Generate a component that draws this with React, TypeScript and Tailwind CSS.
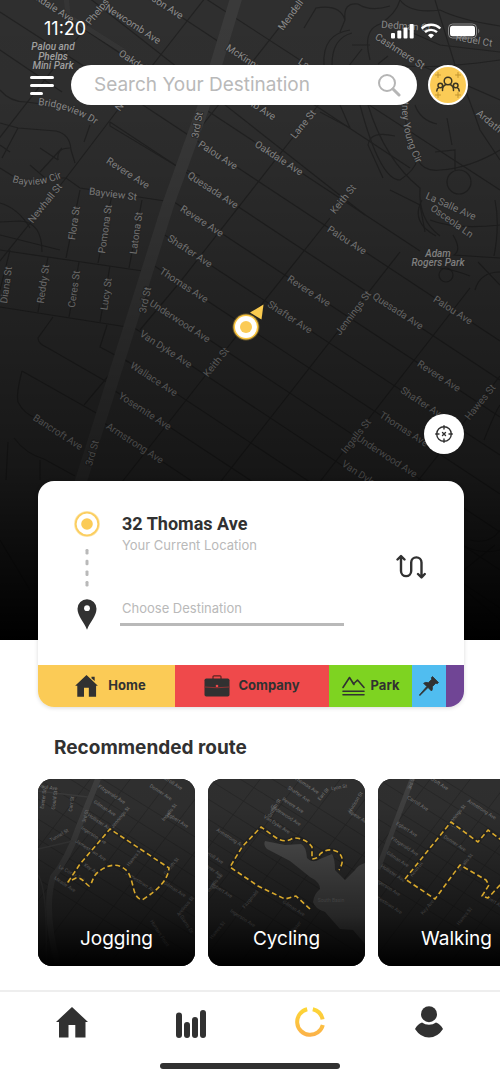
import type { ReactNode } from 'react';

type Label = [text: string, x: number, y: number, angle: number];

const AVE = 33;
const ST = -51;

const mapLabels: Label[] = [
  ['Oakdale Ave', 50, 5, AVE],
  ['Phelps St', 101, 7, ST],
  ['Newcomb Ave', 133, 24, AVE],
  ['Hudson Ave', 160, 2, AVE],
  ['McKinnon Ave', 254, 64, AVE],
  ['Oakdale Ave', 143, 67, AVE],
  ['La Salle Ave', 322, 75, AVE],
  ['Newcomb Ave', 248, 100, AVE],
  ['Newhall St', 132, 91, ST],
  ['3rd St', 197, 125, -80],
  ['Palou Ave', 218, 155, AVE],
  ['Quesada Ave', 213, 190, AVE],
  ['Revere Ave', 202, 221, AVE],
  ['Revere Ave', 128, 173, AVE],
  ['Bayview St', 113, 194, 7],
  ['Newhall St', 45, 203, ST],
  ['Flora St', 74, 223, -82],
  ['Pomona St', 105, 229, -82],
  ['Latona St', 136, 233, -82],
  ['Diana St', 6, 285, -82],
  ['Reddy St', 43, 284, -82],
  ['Ceres St', 74, 289, -82],
  ['Lucy St', 106, 294, -82],
  ['3rd St', 145, 300, -78],
  ['3rd St', 92, 453, -74],
  ['Shafter Ave', 190, 251, AVE],
  ['Thomas Ave', 184, 285, AVE],
  ['Underwood Ave', 180, 321, AVE],
  ['Van Dyke Ave', 166, 349, AVE],
  ['Wallace Ave', 154, 379, AVE],
  ['Yosemite Ave', 145, 411, AVE],
  ['Armstrong Ave', 135, 443, AVE],
  ['Bancroft Ave', 58, 432, AVE],
  ['Keith St', 216, 362, ST],
  ['Mendell St', 294, 10, -54],
  ['Dedman Ct', 406, 26, 4],
  ['Cashmere St', 400, 51, AVE],
  ['Reuel Ct', 474, 40, 10],
  ['Lane St', 303, 124, ST],
  ['Oakdale Ave', 279, 158, AVE],
  ['Keith St', 343, 199, ST],
  ['Ardath Ct', 494, 125, 40],
  ['La Salle Ave', 451, 206, 24],
  ['Osceola Ln', 452, 221, 35],
  ['Palou Ave', 347, 240, AVE],
  ['Revere Ave', 309, 291, AVE],
  ['Shafter Ave', 290, 317, AVE],
  ['Jennings St', 353, 313, -53],
  ['Quesada Ave', 398, 311, AVE],
  ['Palou Ave', 453, 310, AVE],
  ['Revere Ave', 439, 376, AVE],
  ['Shafter Ave', 423, 403, AVE],
  ['Thomas Ave', 404, 429, AVE],
  ['Hawes St', 480, 402, ST],
  ['Ingalls St', 356, 436, ST],
  ['Underwood Ave', 387, 456, AVE],
  ['Van Dyke Ave', 368, 479, AVE],
];

const roads = [
  'M120 -57L500 190',
  'M95 -40L410 168',
  'M60 -25L365 215',
  'M0 -26L420 251',
  'M0 12L96 74L500 341',
  'M0 50L62 92M110 122L500 380',
  'M165 196L500 417',
  'M157 230L500 455',
  'M150 263L500 494',
  'M140 294L500 532',
  'M130 325L500 570',
  'M118 355L500 608',
  'M106 385L480 632',
  'M95 417L420 632',
  'M107 0L-10 150',
  'M216 -16L120 107L66 178L-20 286',
  'M301 0L190 141',
  'M362 49L180 282L140 330',
  'M330 218L216 362L100 510',
  'M400 252L200 508L120 610',
  'M470 288L250 572',
  'M500 376L320 606',
  'M0 250L143 271M0 307L127 327M0 235L60 250',
  'M10 250L0 290M48 257L38 312M79 262L69 317M110 266L100 322',
  'M80 190L66 258M112 195L98 263M142 200L129 268',
  'M0 123L18 128L56 131Q70 134 71 150L75 163',
  'M18 128L2 158M40 148L58 160M30 165L45 178L66 178L80 188L165 201',
  'M58 160Q56 148 70 148M40 172L62 148M0 145L10 152M0 168L16 178M0 203Q18 208 30 228',
  'M0 222L20 221Q42 222 42 252',
  'M90 125L84 142M110 122L110 126L175 165M175 165L200 176',
  'M0 90Q10 102 26 102L42 104',
  'M53 317L38 338Q38 344 48 348L107 382M107 325L100 347L128 362',
  'M115 368L84 405M22 371Q16 394 18 402Q24 414 36 418M22 371L98 414',
  'M8 442L6 480M14 438Q26 454 44 459L75 476M40 460V480',
  'M304 28L316 8Q340 4 345 20L340 32M345 20Q343 2 358 4Q370 12 390 6',
  'M324 65Q322 34 350 30M332 65Q332 38 352 33',
  'M352 45L370 45M370 60Q362 30 380 24Q396 14 400 0',
  'M378 64L388 56M390 23L440 45L500 52M395 65Q430 70 500 60',
  'M400 0Q410 14 440 10Q460 20 500 26M435 0L455 65Q470 100 480 130L500 160',
  'M420 65L500 100M405 105Q404 132 418 160Q424 172 440 170Q470 168 500 150',
  'M360 105Q380 180 400 180Q415 170 417 160M368 105Q385 160 420 188Q418 220 440 236',
  'M340 105L350 128L320 112M395 136Q370 130 368 145L383 178M415 105Q420 120 437 124',
  'M455 170V150L435 152M447 118L452 145M390 190L420 205L425 232',
  'M422 200Q410 222 436 236M430 220Q455 230 500 225M453 235Q462 250 454 255L500 258M495 200Q500 225 494 256',
  'M475 290Q480 272 500 272M440 268Q455 270 470 276M478 262L500 285',
  'M484 440Q496 410 500 405M470 540Q490 545 500 530M465 590L500 620M0 540L30 590',
  'M464 570L495 545M500 550Q460 560 430 510',
];

function MapText({ text, x, y, angle }: { text: string; x: number; y: number; angle: number }) {
  return (
    <text transform={`translate(${x} ${y}) rotate(${angle})`} textAnchor="middle" dominantBaseline="central">
      {text}
    </text>
  );
}

function CityMap() {
  return (
    <svg
      className="absolute inset-x-0 top-0 h-[640px] w-full bg-black"
      viewBox="0 0 500 640"
      preserveAspectRatio="xMidYMin slice"
      aria-hidden="true"
    >
      <defs>
        <linearGradient id="mapFade" x1="0" y1="0" x2="0" y2="1">
          <stop offset="0" stopColor="#000" stopOpacity="0" />
          <stop offset="0.16" stopColor="#000" stopOpacity="0.03" />
          <stop offset="0.36" stopColor="#000" stopOpacity="0.18" />
          <stop offset="0.73" stopColor="#000" stopOpacity="0.52" />
          <stop offset="1" stopColor="#000" stopOpacity="1" />
        </linearGradient>
        <path id="bridgeview" d="M38 105Q70 108 96 125" />
        <path id="bayviewCir" d="M12 182Q36 190 66 176" />
        <path id="whitney" d="M404 85Q396 128 420 170" />
      </defs>
      <rect width="500" height="640" fill="#2f2f2f" />
      <g fill="none" stroke="#222" strokeWidth="1.2">
        {roads.map((d) => (
          <path key={d} d={d} />
        ))}
        <circle cx="459" cy="182" r="12" />
        <circle cx="446" cy="275" r="7" />
      </g>
      <g fill="none" stroke="#3a3a3a">
        <path d="M238 -8L203 108L168 205L75 500L60 640" strokeWidth="12" />
        <path d="M66 -5L68 16L125 52" strokeWidth="5" opacity="0.6" />
      </g>
      <g
        fontFamily="Roboto, 'Liberation Sans', sans-serif"
        fontSize="10"
        fill="#8c8c8c"
        stroke="#2d2d2d"
        strokeWidth="2"
        paintOrder="stroke"
      >
        {mapLabels.map(([text, x, y, angle]) => (
          <MapText key={`${text}${x}`} text={text} x={x} y={y} angle={angle} />
        ))}
        <text>
          <textPath href="#bridgeview">Bridgeview Dr</textPath>
        </text>
        <text>
          <textPath href="#bayviewCir">Bayview Cir</textPath>
        </text>
        <text>
          <textPath href="#whitney">Whitney Young Cir</textPath>
        </text>
        <g textAnchor="middle" fontStyle="italic" fontWeight="500" fill="#a3a3a3">
          <text x="53" y="50">Palou and</text>
          <text x="53" y="60">Phelps</text>
          <text x="53" y="69">Mini Park</text>
          <text x="438" y="257">Adam</text>
          <text x="438" y="266">Rogers Park</text>
        </g>
      </g>
      <rect width="500" height="640" fill="url(#mapFade)" />
      <circle cx="246" cy="327" r="13.5" fill="#fbca4f" opacity="0.35" />
      <circle cx="246" cy="327" r="12.5" fill="#fbc640" />
      <circle cx="246" cy="327" r="11" fill="#fff" />
      <circle cx="246" cy="327" r="6" fill="#fbcb56" />
      <path d="M250 312.500L263.500 304.500L261.500 319.500Z" fill="#fbcb4f" />
    </svg>
  );
}

function StatusBar() {
  return (
    <div className="flex h-[58px] items-center justify-between pl-11 pr-[19px] text-white">
      <span className="text-[18px] leading-6">11:20</span>
      <svg className="mt-1 h-5 w-[91px]" viewBox="0 0 91 20" fill="none" aria-hidden="true">
        <g fill="#fff">
          <rect x="1" y="12" width="4" height="5.500" rx="1" />
          <rect x="7.300" y="9.500" width="4" height="8" rx="1" />
          <rect x="13.500" y="6.500" width="4" height="11" rx="1" />
          <rect x="19.700" y="3" width="4" height="14.500" rx="1" />
          <path d="M41 17.200l-3-3a4.300 4.300 0 0 1 6 0z" />
        </g>
        <path d="M31.700 7.500a13.500 13.500 0 0 1 18.600 0M35 11.200a8.800 8.800 0 0 1 12 0" stroke="#fff" strokeWidth="2.400" />
        <rect x="58.500" y="3" width="28" height="14" rx="4" stroke="#8a8a8a" />
        <rect x="60" y="4.800" width="25" height="10.500" rx="2.500" fill="#fff" />
        <path d="M88.300 7.500q2 2.500 0 5z" fill="#8a8a8a" />
      </svg>
    </div>
  );
}

function GroupIcon() {
  return (
    <svg className="h-9 w-9" viewBox="0 0 36 36" fill="none" stroke="#3b3423" strokeWidth="1.500" strokeLinecap="round" aria-hidden="true">
      <path d="M8 5.500v5M5.500 8h5M28 5.500v5M25.500 8h5M8 25.500v5M5.500 28h5M28 25.500v5M25.500 28h5" stroke="#c2952f" strokeWidth="1" />
      <circle cx="18" cy="14" r="3.800" />
      <path d="M12.500 23.500c-.3-3.300 1.600-5.200 3.600-6M23.500 23.500c.3-3.300-1.600-5.200-3.600-6" />
      <circle cx="10.300" cy="18.500" r="2.300" />
      <circle cx="25.700" cy="18.500" r="2.300" />
      <path d="M6.800 24c0-1.800.7-2.900 2-3.400M29.200 24c0-1.800-.7-2.900-2-3.400" />
    </svg>
  );
}

function HomeIcon({ className, chimney = false }: { className: string; chimney?: boolean }) {
  return (
    <svg className={className} viewBox="0 0 32 31" fill="#313131" aria-hidden="true">
      <path d="M16 0L32 15H29.500V30.500H19.300V18H12.500V30.500H3V15H0Z" />
      {chimney && <path d="M23 2.500h4.500v6L23 4.500z" />}
    </svg>
  );
}

function TripCard() {
  return (
    <section className="relative ml-[38px] mr-9 overflow-hidden rounded-2xl bg-white shadow-[0_1px_4px_rgba(0,0,0,0.15)]">
      <div className="flex items-start pb-[35px] pl-9 pr-[38px] pt-[30px]">
        <div className="flex w-[26px] flex-col items-center">
          <svg className="h-[26px] w-[26px]" viewBox="0 0 26 26" aria-hidden="true">
            <circle cx="13" cy="13" r="11.500" fill="none" stroke="#fde9b5" strokeWidth="3" />
            <circle cx="13" cy="13" r="11.300" fill="#fff" stroke="#fbce60" strokeWidth="1.800" />
            <circle cx="13" cy="13" r="5.800" fill="#fbcb56" />
          </svg>
          <svg className="mt-3 h-[38px] w-1" viewBox="0 0 4 38" fill="#b9b9b9" aria-hidden="true">
            <rect x="0.500" y="0" width="3" height="5.500" rx="1.200" />
            <rect x="0.500" y="10.700" width="3" height="5.500" rx="1.200" />
            <rect x="0.500" y="21.400" width="3" height="5.500" rx="1.200" />
            <rect x="0.500" y="32" width="3" height="5.500" rx="1.200" />
          </svg>
          <svg className="mt-3 h-[31px] w-5" viewBox="0 0 20 31" aria-hidden="true">
            <path d="M10 .3a9.500 9.500 0 0 1 9.500 9.500C19.500 17 13.500 22 10 30.800 6.500 22 .5 17 .5 9.800A9.500 9.500 0 0 1 10 .3Z" fill="#313131" />
            <circle cx="10" cy="9.200" r="2.900" fill="#fff" />
          </svg>
        </div>
        <div className="ml-5 w-[224px]">
          <h2 className="pl-0.5 font-[Roboto,sans-serif] text-[18px] font-bold leading-[26px] text-[#313131]">32 Thomas Ave</h2>
          <p className="pl-0.5 text-[13px] leading-4 text-[#b9b9b9]">Your Current Location</p>
          <input
            type="text"
            aria-label="Choose Destination"
            placeholder="Choose Destination"
            className="mt-[45px] block h-[28px] w-full border-b-[3px] border-[#b9b9b9] bg-transparent pb-1.5 pl-0.5 text-[13px] text-[#313131] outline-none placeholder:text-[#b9b9b9]"
          />
        </div>
        <button type="button" aria-label="Swap route" className="ml-auto mt-[43px] h-[26px] w-[30px]">
          <svg className="h-full w-full" viewBox="0 0 30 26" fill="none" stroke="#313131" strokeWidth="2.400" strokeLinecap="round" strokeLinejoin="round" aria-hidden="true">
            <path d="M1.500 5.500L5 2L8.500 5.500M5 2.500V17a5 5 0 0 0 10.200 0V8.500a5.100 5.100 0 0 1 10.300 0V22.500M22 20L25.500 23.500L28.800 20" />
          </svg>
        </button>
      </div>
      <div className="flex h-[42px] text-[13px] font-bold text-[#313131]">
        <button type="button" className="flex w-[137px] shrink-0 items-center justify-center gap-2.5 bg-[#fbcb56] pl-2">
          <HomeIcon className="h-[22px] w-[23px]" chimney />
          Home
        </button>
        <button type="button" className="flex w-[154px] shrink-0 items-center justify-center gap-2 bg-[#ef494b]">
          <svg className="h-[22px] w-[26px]" viewBox="0 0 26 22" aria-hidden="true">
            <path d="M9 4V1.800Q9 .8 10 .8H16Q17 .8 17 1.800V4" fill="none" stroke="#5c2323" strokeWidth="1.200" />
            <rect x="0.500" y="3.500" width="25" height="18" rx="1.800" fill="#313131" />
            <path d="M.5 12Q13 13.500 25.500 12" fill="none" stroke="#8f3334" strokeWidth="1" />
            <circle cx="13" cy="11" r="1.300" fill="#ef494b" />
          </svg>
          Company
        </button>
        <button type="button" className="flex w-[83px] shrink-0 items-center justify-center gap-1.5 bg-[#7ed321]">
          <svg className="h-5 w-[23px]" viewBox="0 0 23 20" fill="none" stroke="#313131" strokeWidth="1.600" strokeLinecap="round" strokeLinejoin="round" aria-hidden="true">
            <path d="M1 11.500L7.500 1.500L12 8.500M10 5.500L11.500 8L15.500 4L22 11.500M1 15.200H22M1 18.800H22" />
          </svg>
          Park
        </button>
        <button type="button" aria-label="Pinned" className="flex w-[34px] shrink-0 items-center justify-center bg-[#50bdf0]">
          <svg className="h-5 w-5" viewBox="0 0 20 20" fill="#313131" aria-hidden="true">
            <path d="M13.500 .5L19.500 6.500L18.300 7.700L16.800 7.200L13.300 10.700Q14 13.500 12.500 15L9 11.500L.8 19.600L.3 19.100L7.800 10.500L4.600 7.300Q6.500 5.800 9.300 6.700L12.800 3.200L12.300 1.700Z" stroke="#313131" strokeWidth="0.800" strokeLinejoin="round" />
          </svg>
        </button>
        <button type="button" aria-label="More places" className="flex-1 bg-[#704595]" />
      </div>
    </section>
  );
}

function RouteCard({ name, route, labels, children }: { name: string; route: string; labels: Label[]; children: ReactNode }) {
  return (
    <a href="#" className="relative flex h-[187px] w-[157px] shrink-0 items-end justify-center overflow-hidden rounded-[14px] bg-black pb-[13px]">
      <svg className="absolute inset-0 h-full w-full" viewBox="0 0 157 187" aria-hidden="true">
        <rect width="157" height="187" fill="#2f2f2f" />
        <g fill="none" stroke="#262626" strokeWidth="0.800">
          <path d="M0 -40L157 58M0 -20L157 78M0 0L157 98M0 20L157 118M0 40L157 138M0 60L157 158M0 80L157 178M0 100L140 187" />
          <path d="M60 -10L-20 95M100 -10L-20 148M140 -10L0 175M180 -10L30 187M220 -10L70 187" />
        </g>
        {children}
        <g fontFamily="Roboto, 'Liberation Sans', sans-serif" fontSize="5" fill="#757575">
          {labels.map(([text, x, y, angle]) => (
            <MapText key={`${text}${x}`} text={text} x={x} y={y} angle={angle} />
          ))}
        </g>
        <rect width="157" height="187" fill="url(#mapFade)" />
        <path d={route} fill="none" stroke="#1d1d1d" strokeWidth="4" strokeLinejoin="round" opacity="0.600" />
        <path d={route} fill="none" stroke="#d9a92c" strokeWidth="1.600" strokeDasharray="5 3" strokeLinejoin="round" />
      </svg>
      <span className="relative text-[19px] leading-7 text-white">{name}</span>
    </a>
  );
}

const joggingLabels: Label[] = [
  ['Paul Ave', 10, 8, 8],
  ['Exeter St', 5, 20, -82],
  ['Gould St', 16, 21, -82],
  ['Carr St', 33, 25, -82],
  ['Tunnel St', 21, 56, -30],
  ['3rd St', 47, 37, -75],
  ['Fitzgerald Ave', 74, 15, AVE],
  ['Gilman Ave', 67, 29, AVE],
  ['Hollister Ave', 62, 43, AVE],
  ['Ingerson Ave', 56, 56, AVE],
  ['Jamestown Ave', 53, 71, AVE],
  ['Jennings St', 82, 38, ST],
  ['Donner Ave', 123, 13, AVE],
  ['Carroll Ave', 134, 3, AVE],
  ['Egbert Ave', 140, 41, AVE],
  ['Ingalls St', 131, 33, ST],
  ['Hawes St', 96, 78, ST],
  ['Griffith St', 133, 87, ST],
  ['Le Conte Ave', 34, 94, 28],
  ['Meade Ave', 27, 105, AVE],
  ['Key Ave', 54, 90, AVE],
  ['Jamestown Ave', 103, 103, AVE],
  ['Gilman Ave', 137, 110, AVE],
  ['Arelious St', 147, 127, ST],
  ['Hunters Point', 122, 154, 57],
  ['Giants Dr', 149, 145, 57],
];

const cyclingLabels: Label[] = [
  ['Thomas Ave', 99, 6, AVE],
  ['Shafter Ave', 91, 15, AVE],
  ['Revere Ave', 85, 26, AVE],
  ['Underwood Ave', 78, 36, AVE],
  ['Van Dyke Ave', 69, 45, AVE],
  ['Griffith St', 66, 29, -60],
  ['Earl St', 115, 15, ST],
  ['Lyon St', 131, 8, -10],
  ['Hudson St', 147, 23, -58],
  ['Spear Ave', 151, 38, AVE],
  ['Armstrong Ave', 23, 59, AVE],
  ['Carroll Ave', 5, 77, AVE],
  ['Donner Ave', 4, 90, AVE],
  ['Egbert Ave', 14, 111, AVE],
  ['Ingalls St', 6, 104, ST],
  ['Fitzgerald', 42, 120, ST],
  ['Gilman Ave', 86, 129, AVE],
  ['South Basin', 123, 121, 0],
  ['Hawes St', 9, 151, ST],
  ['Ingerson Ave', 35, 139, AVE],
  ['Hollister', 86, 150, ST],
];

const walkingLabels: Label[] = [
  ['Bancroft Ave', 58, 2, AVE],
  ['Carroll Ave', 40, 24, AVE],
  ['Egbert Ave', 29, 50, AVE],
  ['Fitzgerald Ave', 27, 67, AVE],
  ['Gilman Ave', 20, 80, AVE],
  ['Hollister Ave', 15, 94, AVE],
  ['Ingerson Ave', 10, 108, AVE],
  ['Jamestown Ave', 9, 124, AVE],
  ['Armstrong Ave', 104, 30, AVE],
  ['Jennings St', 78, 36, ST],
  ['Carroll Ave', 84, 51, AVE],
  ['Donner Ave', 77, 64, AVE],
  ['Ingalls St', 87, 83, ST],
  ['3rd St', 33, 4, -70],
  ['Keith St', 38, 90, ST],
  ['Key Ave', 49, 128, ST],
  ['Hawes St', 86, 137, ST],
  ['Egbert Ave', 116, 122, AVE],
];

function TabLink({ label, children }: { label: string; children: ReactNode }) {
  return (
    <a href="#" aria-label={label} className="flex items-center justify-center">
      {children}
    </a>
  );
}

function TabBar() {
  return (
    <nav className="mt-6 border-t-2 border-[#eeeeee] pb-[13px]">
      <div className="grid h-[60px] grid-cols-4 px-3">
        <TabLink label="Home">
          <HomeIcon className="h-[31px] w-8" />
        </TabLink>
        <TabLink label="Statistics">
          <svg className="mt-1 h-7 w-[30px]" viewBox="0 0 30 28" fill="#313131" aria-hidden="true">
            <rect x="0" y="2.500" width="6" height="25.500" rx="3" />
            <rect x="8" y="12" width="6" height="16" rx="3" />
            <rect x="16" y="7" width="6" height="21" rx="3" />
            <rect x="24" y="0" width="6" height="28" rx="3" />
          </svg>
        </TabLink>
        <TabLink label="Activity">
          <svg className="h-[30px] w-[30px]" viewBox="0 0 30 30" fill="none" aria-hidden="true">
            <defs>
              <linearGradient id="ring" x1="0" y1="0" x2="0" y2="30" gradientUnits="userSpaceOnUse">
                <stop offset="0" stopColor="#fdd835" />
                <stop offset="1" stopColor="#fbb04a" />
              </linearGradient>
            </defs>
            <path d="M12.200 2.200A13 13 0 1 0 27.800 18M17.800 2.200A13 13 0 0 1 27.600 12.300" stroke="url(#ring)" strokeWidth="4" />
          </svg>
        </TabLink>
        <TabLink label="Profile">
          <svg className="h-8 w-7" viewBox="0 0 28 32" fill="#313131" aria-hidden="true">
            <circle cx="14" cy="8.200" r="8" />
            <path d="M7 16.500Q10 18.700 14 18.700T21 16.500Q25.500 18 28 23Q22.500 31.500 14 31.500T0 23Q2.500 18 7 16.500Z" />
          </svg>
        </TabLink>
      </div>
      <div className="mx-auto mt-[11px] h-[6px] w-[180px] rounded-full bg-[#313131]" />
    </nav>
  );
}

export default function App() {
  return (
    <main className="relative min-h-screen overflow-hidden bg-white font-[Inter,'Liberation_Sans',sans-serif]">
      <CityMap />
      <div className="relative">
        <StatusBar />
        <header className="mt-[7px] flex items-center gap-[11px] pl-[30px] pr-8">
          <button type="button" aria-label="Menu" className="flex h-10 w-[30px] flex-col justify-center gap-[5px]">
            <span className="h-[3px] w-6 rounded-full bg-white" />
            <span className="h-[3px] w-6 rounded-full bg-white" />
            <span className="h-[3px] w-[13px] rounded-full bg-white" />
          </button>
          <div className="flex h-10 min-w-0 flex-1 items-center rounded-full bg-white pl-[23px] pr-4">
            <input
              type="search"
              aria-label="Search Your Destination"
              placeholder="Search Your Destination"
              className="min-w-0 flex-1 bg-transparent text-[19px] leading-6 text-[#313131] outline-none placeholder:text-[#b9b9b9]"
            />
            <svg className="h-6 w-6 shrink-0" viewBox="0 0 24 24" fill="none" stroke="#b5b5b5" strokeLinecap="round" aria-hidden="true">
              <circle cx="10" cy="10" r="8" strokeWidth="2" />
              <path d="M16 16L22 22" strokeWidth="3" />
            </svg>
          </div>
          <button type="button" aria-label="Friends" className="flex h-10 w-10 shrink-0 items-center justify-center rounded-full border-2 border-white bg-[#fbcb56]">
            <GroupIcon />
          </button>
        </header>
        <div className="flex h-[376px] items-end justify-end pb-[27px] pr-9">
          <button type="button" aria-label="Locate me" className="flex h-10 w-10 items-center justify-center rounded-full bg-white">
            <svg className="h-[18px] w-[18px]" viewBox="0 0 18 18" fill="none" stroke="#313131" strokeWidth="1.400" strokeLinecap="round" aria-hidden="true">
              <circle cx="9" cy="9" r="7.300" />
              <path d="M9 .7V4M9 14V17.300M.7 9H4M14 9H17.300M7.500 7.500L10.500 10.500M10.500 7.500L7.500 10.500" />
            </svg>
          </button>
        </div>
        <TripCard />
      </div>
      <section>
        <h2 className="mt-[26px] pl-[54px] text-[19px] font-bold leading-[30px] text-[#313131]">Recommended route</h2>
        <div className="mt-4 flex gap-[13px] overflow-hidden pl-[38px]">
          <RouteCard
            name="Jogging"
            labels={joggingLabels}
            route="M30 103L42 85L72 50L131 89Q130 105 104 121C94 118 97 106 90 93C82 84 72 84 60 93C54 98 55 104 51 107C46 103 43 98 38 99Z"
          >
            <path d="M60 0L40 50Q30 80 15 98Q5 130 20 187" fill="none" stroke="#3d3d3d" strokeWidth="6" />
            <path d="M0 70L35 62M0 12L50 18M0 96Q10 110 8 187" fill="none" stroke="#3a3a3a" strokeWidth="1.500" />
          </RouteCard>
          <RouteCard
            name="Cycling"
            labels={cyclingLabels}
            route="M102 130L88 117L77 120L50 107L22 88L34 68L53 48L67 58Q77 65 85 59Q98 59 104 68L104 80Q110 80 112 75Q120 68 130 73Q138 80 131 91"
          >
            <path
              d="M57 62L77 66L93 65Q98 67 99 79Q104 85 112 80L124 75Q127 80 127 91L137 101L147 91Q150 86 157 84V165L145 151L132 150L117 133Q107 130 105 123Q106 115 112 110Q112 103 102 98L82 82L59 70Q55 66 57 62Z"
              fill="#505050"
            />
          </RouteCard>
          <RouteCard
            name="Walking"
            labels={walkingLabels}
            route="M27 100L73 43L100 63L110 51L135 70L122 106L110 119L104 117L111 106L108 101L82 86L57 120Z"
          >
            <path d="M36 -5L0 90" fill="none" stroke="#404040" strokeWidth="5" />
          </RouteCard>
        </div>
      </section>
      <TabBar />
    </main>
  );
}
